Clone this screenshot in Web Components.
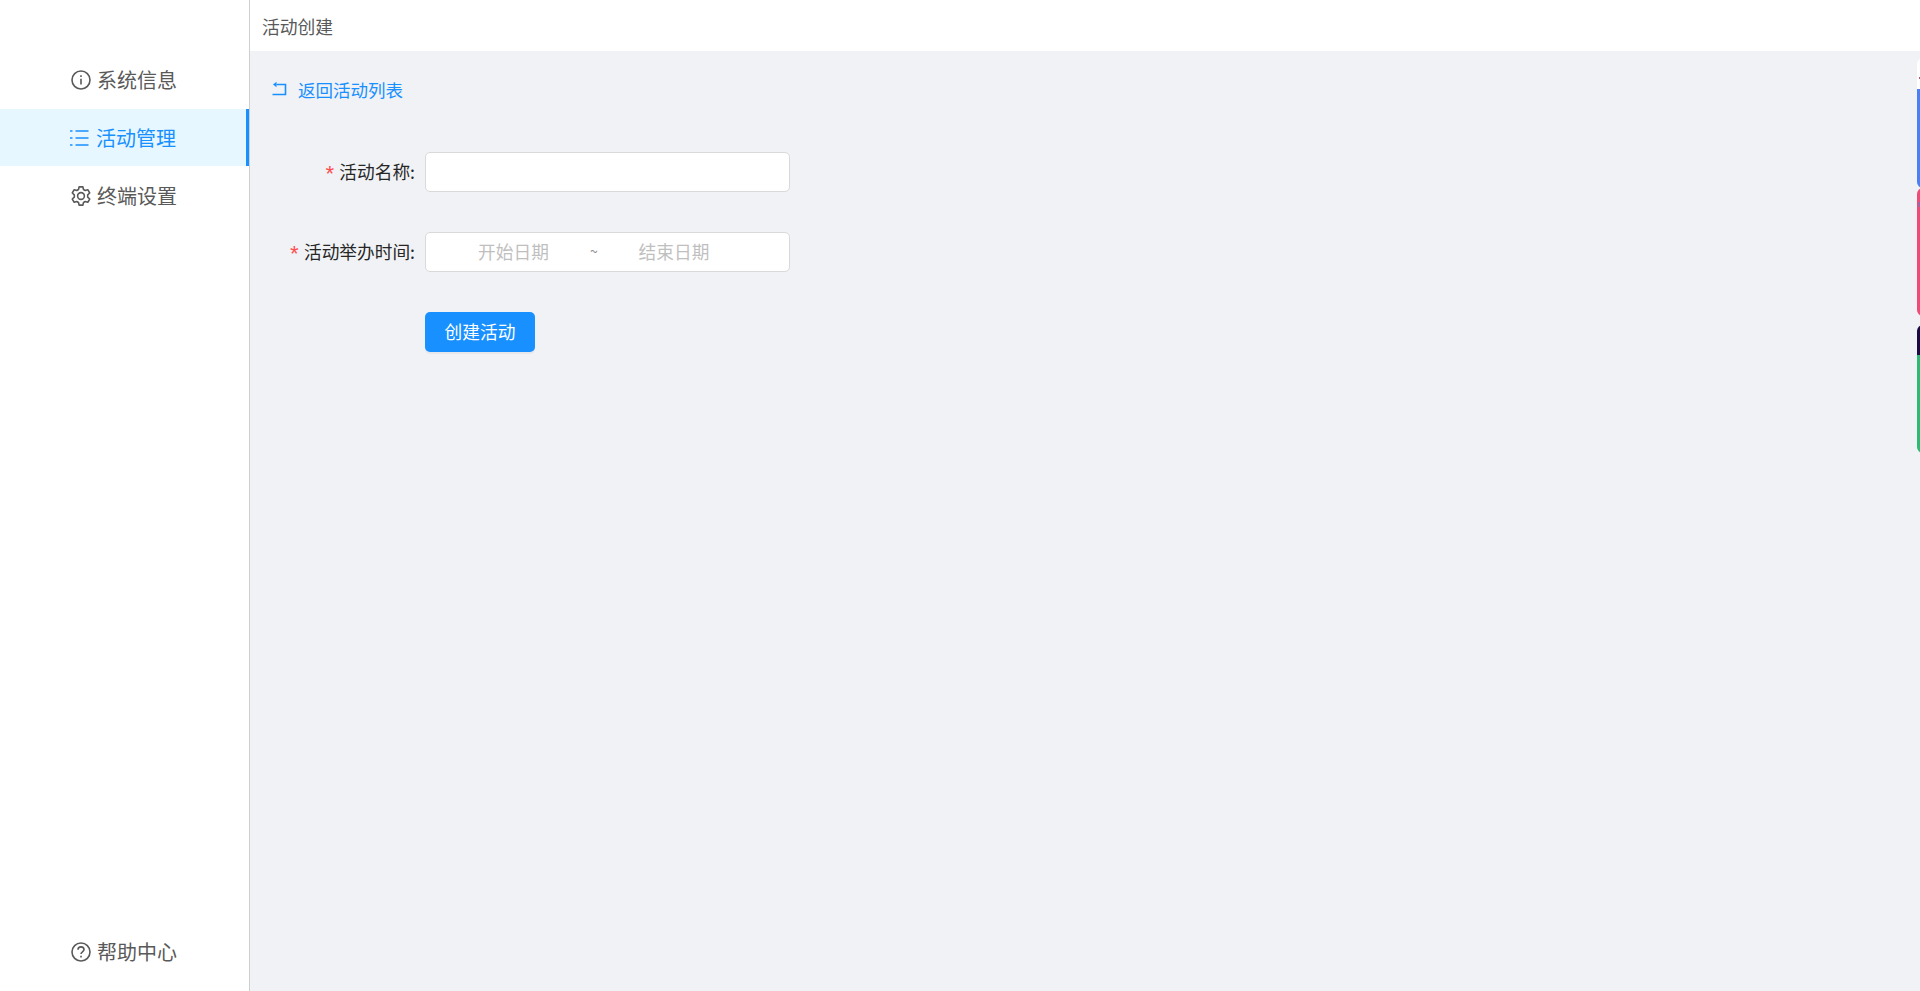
<!DOCTYPE html>
<html lang="zh-CN">
<head>
<meta charset="utf-8">
<title>活动创建</title>
<style>
html, body { margin: 0; height: 100%; }
body { font-family: "Noto Sans CJK SC", "Liberation Sans", sans-serif; overflow: hidden; }
</style>
</head>
<body>
<app-shell>
  <side-nav slot="nav">
    <nav-item icon="info">系统信息</nav-item>
    <nav-item icon="list" active>活动管理</nav-item>
    <nav-item icon="gear">终端设置</nav-item>
    <nav-item slot="bottom" icon="help">帮助中心</nav-item>
  </side-nav>
  <top-bar slot="top">活动创建</top-bar>
  <back-link>返回活动列表</back-link>
  <form-row label="活动名称"><text-box></text-box></form-row>
  <form-row label="活动举办时间"><date-range></date-range></form-row>
  <form-row><primary-button>创建活动</primary-button></form-row>
  <edge-tabs slot="edge"></edge-tabs>
</app-shell>

<script>
// icons used by the nav
const ICONS = {
  info: '<circle cx="10" cy="10" r="9"/><path d="M10 8.800v5.800"/><path d="M10 5.200v1.900"/>',
  list: '<path d="M5.500 3h13M5.500 10h13M5.500 17h13"/><path d="M0 3h2.500M0 10h2.500M0 17h2.500"/>',
  gear: '<circle cx="10" cy="10" r="3.400"/><path d="M8.100 .9h3.800l.6 2.600 1.700 1 2.600-.8 1.900 3.300-2 1.800v2.400l2 1.800-1.900 3.300-2.600-.8-1.700 1-.6 2.600H8.100l-.6-2.600-1.700-1-2.600.8-1.900-3.300 2-1.800V8.800l-2-1.800 1.900-3.300 2.600.8 1.700-1z" stroke-linejoin="round"/>',
  help: '<circle cx="10" cy="10" r="9"/><path d="M7 7.800c0-1.700 1.300-2.900 3-2.900s3 1.100 3 2.700c0 2.300-3 2.300-3 4.500"/><path d="M10 13.700v1.900"/>'
};

class AppShell extends HTMLElement {
  constructor() {
    super();
    const shadow = this.attachShadow({ mode: 'open' });
    shadow.innerHTML = `
      <style>
        :host { display: grid; grid-template-columns: 250px 1fr; height: 991px; position: relative; background: #fff; }
        .main { display: flex; flex-direction: column; min-width: 0; }
        .content { flex: 1; background: #f0f2f5; padding: 0 20px; position: relative; }
      </style>
      <slot name="nav"></slot>
      <div class="main">
        <slot name="top"></slot>
        <div class="content"><slot></slot><slot name="edge"></slot></div>
      </div>`;
  }
}
customElements.define('app-shell', AppShell);

class SideNav extends HTMLElement {
  constructor() {
    super();
    const shadow = this.attachShadow({ mode: 'open' });
    shadow.innerHTML = `
      <style>
        :host { display: flex; flex-direction: column; justify-content: space-between; border-right: 1px solid #cfcfcf; box-sizing: border-box; padding: 51px 0 10px; height: 991px; }
        .top { display: flex; flex-direction: column; }
      </style>
      <div class="top"><slot></slot></div>
      <slot name="bottom"></slot>`;
  }
}
customElements.define('side-nav', SideNav);

class NavItem extends HTMLElement {
  constructor() {
    super();
    const shadow = this.attachShadow({ mode: 'open' });
    const icon = this.getAttribute('icon');
    shadow.innerHTML = `
      <style>
        :host { display: flex; align-items: center; height: 58px; padding-left: 71px; gap: 6px; color: #595959; font-size: 20px; box-sizing: border-box; }
        :host([active]) { background: linear-gradient(#e6f7ff 0 57px, transparent 57px); color: #1890ff; padding-left: 70px; position: relative; }
        :host([active])::after { content: ""; position: absolute; right: 0; top: 0; width: 3px; height: 57px; background: #1890ff; }
        svg { width: 20px; height: 20px; fill: none; stroke: currentColor; stroke-width: 1.600; flex: none; }
        .label { line-height: 1; padding-bottom: 1px; }
      </style>
      <svg viewBox="0 0 20 20">${ICONS[icon]}</svg>
      <span class="label"><slot></slot></span>`;
  }
}
customElements.define('nav-item', NavItem);

class TopBar extends HTMLElement {
  constructor() {
    super();
    const shadow = this.attachShadow({ mode: 'open' });
    shadow.innerHTML = `
      <style>
        :host { display: flex; align-items: center; height: 51px; padding-left: 12px; background: #fff; color: #595959; font-size: 17.800px; }
      </style>
      <slot></slot>`;
  }
}
customElements.define('top-bar', TopBar);

class BackLink extends HTMLElement {
  constructor() {
    super();
    const shadow = this.attachShadow({ mode: 'open' });
    shadow.innerHTML = `
      <style>
        :host { display: flex; align-items: center; gap: 11px; height: 30px; margin-top: 23px; margin-bottom: 48px; color: #1890ff; font-size: 17.500px; }
        svg { width: 16px; height: 16px; fill: none; stroke: currentColor; stroke-width: 1.600; margin-left: 1px; }
      </style>
      <svg viewBox="0 0 16 16"><path d="M5.500 3.500H14.500v10H1.500"/><path d="M5.500 .8v5.400L2 3.500z" fill="currentColor" stroke="none"/></svg>
      <span><slot></slot></span>`;
  }
}
customElements.define('back-link', BackLink);

class FormRow extends HTMLElement {
  constructor() {
    super();
    const shadow = this.attachShadow({ mode: 'open' });
    const label = this.getAttribute('label');
    shadow.innerHTML = `
      <style>
        :host { display: grid; grid-template-columns: 145px 365px; column-gap: 10px; align-items: center; height: 40px; margin-bottom: 40px; }
        .label { text-align: right; font-size: 17.700px; color: #262626; white-space: nowrap; padding-bottom: 2px; }
        .req { color: #ff4d4f; font-size: 22px; line-height: 0; margin-right: 3px; font-family: "Liberation Mono", monospace; vertical-align: -3px; }
      </style>
      <div class="label">${label ? `<span class="req">*</span>${label}:` : ''}</div>
      <div><slot></slot></div>`;
  }
}
customElements.define('form-row', FormRow);

class TextBox extends HTMLElement {
  constructor() {
    super();
    const shadow = this.attachShadow({ mode: 'open' });
    shadow.innerHTML = `
      <style>
        :host { display: block; height: 40px; box-sizing: border-box; background: #fff; border: 1px solid #d9d9d9; border-radius: 5px; }
      </style>`;
  }
}
customElements.define('text-box', TextBox);

class DateRange extends HTMLElement {
  constructor() {
    super();
    const shadow = this.attachShadow({ mode: 'open' });
    shadow.innerHTML = `
      <style>
        :host { display: grid; grid-template-columns: 151px 10px 150px; align-items: center; height: 40px; padding-left: 12px; padding-bottom: 2px; box-sizing: border-box; background: #fff; border: 1px solid #d9d9d9; border-radius: 5px; font-size: 17.700px; color: #bfbfbf; text-align: center; }
        .sep { color: #8c8c8c; font-size: 14px; }
      </style>
      <span>开始日期</span><span class="sep">~</span><span>结束日期</span>`;
  }
}
customElements.define('date-range', DateRange);

class PrimaryButton extends HTMLElement {
  constructor() {
    super();
    const shadow = this.attachShadow({ mode: 'open' });
    shadow.innerHTML = `
      <style>
        :host { display: inline-flex; align-items: center; justify-content: center; width: 110px; height: 40px; padding-bottom: 2px; box-sizing: border-box; vertical-align: top; background: #1890ff; color: #fff; border-radius: 5px; font-size: 17.700px; box-shadow: 0 2px 0 rgba(0,0,0,.045); }
      </style>
      <slot></slot>`;
  }
}
customElements.define('primary-button', PrimaryButton);

// the clipped floating tabs on the right edge
class EdgeTabs extends HTMLElement {
  constructor() {
    super();
    const shadow = this.attachShadow({ mode: 'open' });
    shadow.innerHTML = `
      <style>
        :host { position: absolute; top: 0; right: 0; width: 3px; height: 460px; display: block; overflow: hidden; }
        div { position: absolute; left: 0; width: 12px; }
        .a { top: 7px; height: 31px; background: #fff; border-radius: 6px 0 0 0; }
        .b { top: 38px; height: 99px; background: #4a80f5; border-radius: 0 0 0 6px; }
        .c { top: 137px; height: 128px; background: #ee4b78; border-radius: 6px 0 0 6px; }
        .d { top: 274px; height: 30px; background: #1a0b45; border-radius: 6px 0 0 0; }
        .e { top: 304px; height: 98px; background: #2db976; border-radius: 0 0 0 6px; }
        .dot1 { top: 26px; left: 2px; width: 1px; height: 2px; background: #b5566a; }
        .dot2 { top: 151px; left: 2px; width: 1px; height: 5px; background: #5a80d0; }
      </style>
      <div class="a"></div><div class="b"></div><div class="c"></div><div class="d"></div><div class="e"></div><div class="dot1"></div><div class="dot2"></div>`;
  }
}
customElements.define('edge-tabs', EdgeTabs);
</script>
</body>
</html>
